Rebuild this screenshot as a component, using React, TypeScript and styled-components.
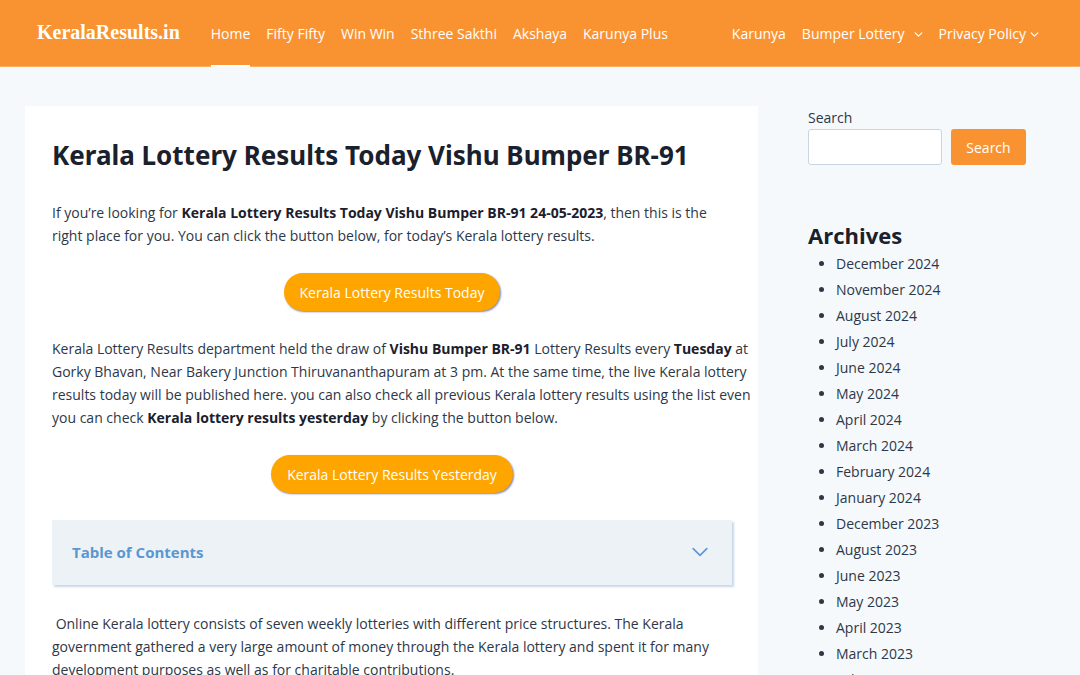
import React from "react";
import styled, { createGlobalStyle } from "styled-components";

const GlobalStyle = createGlobalStyle`
  *, *::before, *::after { box-sizing: border-box; }
  html { scrollbar-width: none; }
  body {
    margin: 0;
    background: #f5f9fc;
    color: #2d3748;
    font-family: "Open Sans", "Noto Sans", sans-serif;
    font-size: 14px;
    line-height: 23px;
  }
  a { color: inherit; text-decoration: none; }
`;

const Header = styled.header`
  display: flex;
  align-items: stretch;
  height: 67px;
  padding: 0 41px 0 37px;
  background: #f99332;
  border-bottom: 1px solid #fcb060;
  color: #fff;
`;

const Logo = styled.a`
  display: flex;
  align-items: center;
  margin-right: 31px;
  padding-bottom: 2px;
  font-family: "Liberation Serif", serif;
  font-size: 20px;
  font-weight: 700;
  white-space: nowrap;
`;

const Nav = styled.nav<{ $end?: boolean }>`
  display: flex;
  gap: 16px;
  margin-left: ${(p) => (p.$end ? "auto" : "0")};
`;

const NavLink = styled.a<{ $active?: boolean; $gap?: number }>`
  display: flex;
  align-items: center;
  gap: ${(p) => p.$gap ?? 0}px;
  padding-top: 2px;
  margin-bottom: -1px;
  border-bottom: 2px solid ${(p) => (p.$active ? "#fff" : "transparent")};
  white-space: nowrap;
`;

const Page = styled.div`
  display: grid;
  grid-template-columns: minmax(0, 1fr) 218px;
  column-gap: 50px;
  padding: 39px 54px 0 25px;
`;

const Article = styled.article`
  background: #fff;
  padding: 27px 26px 27px 27px;
`;

const Title = styled.h1`
  margin: 0 0 24px;
  color: #1a202c;
  font-family: "Noto Sans", sans-serif;
  font-size: 26px;
  line-height: 44px;
`;

const Paragraph = styled.p`
  margin: 0 -20px 26px 0;
  strong { color: #1a202c; }
`;

const ButtonRow = styled.div`
  display: flex;
  justify-content: center;
  margin-bottom: 26px;
`;

const PillButton = styled.button`
  height: 38px;
  padding: 0 16px;
  border: 0;
  border-radius: 19px;
  background: #ffa500;
  box-shadow: 1px 1px 2px #7b84ad;
  color: #fff;
  font: inherit;
  cursor: pointer;
`;

const TocToggle = styled.button`
  display: flex;
  align-items: center;
  justify-content: space-between;
  width: 100%;
  height: 65px;
  margin: 27px 0;
  padding: 0 24px 0 20px;
  border: 0;
  background: #edf2f7;
  box-shadow: 2px 2px 2px #c8d8e8;
  color: #5a97d1;
  font: inherit;
  font-size: 15px;
  font-weight: 700;
  cursor: pointer;
`;

const Sidebar = styled.aside`
  display: flex;
  flex-direction: column;
`;

const SearchForm = styled.form`
  display: grid;
  grid-template-columns: minmax(0, 1fr) 75px;
  column-gap: 9px;
  margin-bottom: 54px;
`;

const SearchLabel = styled.label`
  grid-column: 1 / -1;
`;

const SearchInput = styled.input`
  min-width: 0;
  height: 36px;
  padding: 0 8px;
  border: 1px solid #cbd5e0;
  border-radius: 3px;
  background: #fff;
  font: inherit;
`;

const SearchButton = styled.button`
  height: 36px;
  padding: 0;
  border: 0;
  border-radius: 3px;
  background: #f99332;
  color: #fff;
  font: inherit;
  cursor: pointer;
`;

const SidebarTitle = styled.h2`
  margin: 0;
  color: #1a202c;
  font-size: 22px;
  line-height: 32px;
`;

const ArchiveList = styled.ul`
  margin: 0;
  padding-left: 28px;
  line-height: 26px;
`;

const NavChevron = () => (
  <svg width="9" height="9" viewBox="0 0 9 9" fill="none" stroke="currentColor" strokeWidth="1.2" strokeLinecap="round" strokeLinejoin="round" aria-hidden="true">
    <path d="M1.2 3.8 4.5 7.1 7.8 3.8" />
  </svg>
);

const TocChevron = () => (
  <svg width="16" height="16" viewBox="0 0 16 16" fill="none" stroke="currentColor" strokeWidth="1.6" strokeLinecap="round" strokeLinejoin="round" aria-hidden="true">
    <path d="M1.2 3.6 8 10.4 14.8 3.6" />
  </svg>
);

const leftLinks = ["Home", "Fifty Fifty", "Win Win", "Sthree Sakthi", "Akshaya", "Karunya Plus"];

const months = [
  "December 2024", "November 2024", "August 2024", "July 2024", "June 2024", "May 2024",
  "April 2024", "March 2024", "February 2024", "January 2024", "December 2023", "August 2023",
  "June 2023", "May 2023", "April 2023", "March 2023", "February 2023",
];

export default function App() {
  return (
    <>
      <GlobalStyle />
      <Header>
        <Logo href="#">KeralaResults.in</Logo>
        <Nav aria-label="Primary">
          {leftLinks.map((label, i) => (
            <NavLink key={label} href="#" $active={i === 0}>{label}</NavLink>
          ))}
        </Nav>
        <Nav $end aria-label="Secondary">
          <NavLink href="#">Karunya</NavLink>
          <NavLink href="#" $gap={9}>Bumper Lottery<NavChevron /></NavLink>
          <NavLink href="#" $gap={4}>Privacy Policy<NavChevron /></NavLink>
        </Nav>
      </Header>
      <Page>
        <Article>
          <Title>Kerala Lottery Results Today Vishu Bumper BR-91</Title>
          <Paragraph>
            If you’re looking for <strong>Kerala Lottery Results Today Vishu Bumper BR-91 24-05-2023</strong>, then this is the
            <br />
            right place for you. You can click the button below, for today’s Kerala lottery results.
          </Paragraph>
          <ButtonRow><PillButton type="button">Kerala Lottery Results Today</PillButton></ButtonRow>
          <Paragraph>
            Kerala Lottery Results department held the draw of <strong>Vishu Bumper BR-91</strong> Lottery Results every{" "}
            <strong>Tuesday</strong> at
            <br />
            Gorky Bhavan, Near Bakery Junction Thiruvananthapuram at 3 pm. At the same time, the live Kerala lottery
            <br />
            results today will be published here. you can also check all previous Kerala lottery results using the list even
            <br />
            you can check <strong>Kerala lottery results yesterday</strong> by clicking the button below.
          </Paragraph>
          <ButtonRow><PillButton type="button">Kerala Lottery Results Yesterday</PillButton></ButtonRow>
          <TocToggle type="button" aria-expanded="false">Table of Contents<TocChevron /></TocToggle>
          <Paragraph>
            {"\u00a0"}Online Kerala lottery consists of seven weekly lotteries with different price structures. The Kerala
            <br />
            government gathered a very large amount of money through the Kerala lottery and spent it for many
            <br />
            development purposes as well as for charitable contributions.
          </Paragraph>
        </Article>
        <Sidebar>
          <SearchForm role="search" onSubmit={(e) => e.preventDefault()}>
            <SearchLabel htmlFor="site-search">Search</SearchLabel>
            <SearchInput id="site-search" type="search" />
            <SearchButton type="submit">Search</SearchButton>
          </SearchForm>
          <SidebarTitle>Archives</SidebarTitle>
          <ArchiveList>
            {months.map((month) => (
              <li key={month}><a href="#">{month}</a></li>
            ))}
          </ArchiveList>
        </Sidebar>
      </Page>
    </>
  );
}
